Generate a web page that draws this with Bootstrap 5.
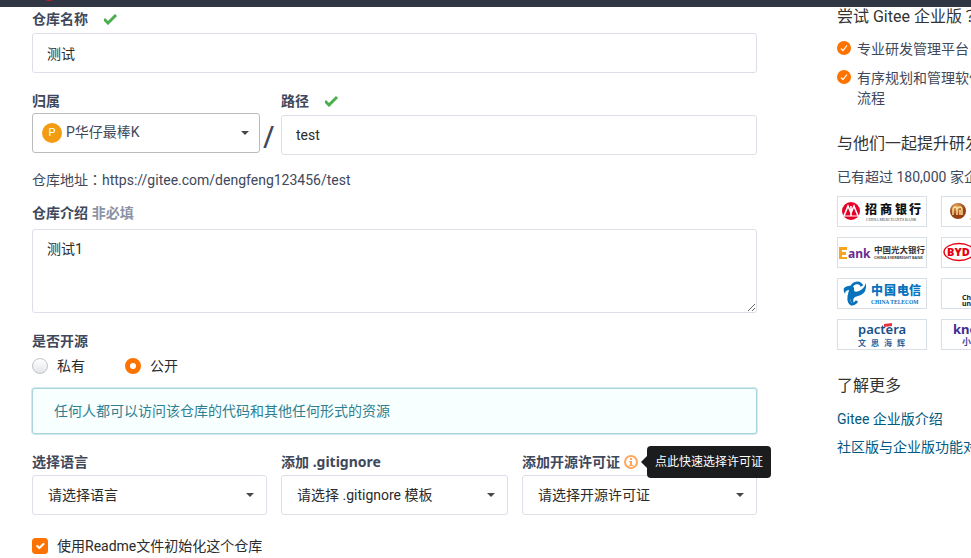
<!DOCTYPE html>
<html lang="zh-CN">
<head>
<meta charset="utf-8">
<meta name="viewport" content="width=device-width, initial-scale=1">
<title>新建仓库 - Gitee</title>
<link href="https://cdn.jsdelivr.net/npm/bootstrap@5.3.0/dist/css/bootstrap.min.css" rel="stylesheet">
<style>
  body { font: 14px/20px Roboto, "Noto Sans CJK SC", sans-serif; color: #40485b; overflow-x: hidden; }
  .topbar { height: 7px; background: #303643; overflow: hidden; padding-left: 43px; }
  .topbar svg { display: block; }
  .page { padding: 2px 0 0 32px; gap: 80px; }
  .side { flex: 0 0 134px; min-width: 0; margin-top: -2px; }
  .side-inner { width: 200px; }
  label, legend { display: block; font-size: 14px; line-height: 20px; }
  .field-label { font-family: "Noto Sans", "Noto Sans CJK SC", sans-serif; font-weight: 700; color: #40485b; margin: 0 0 4px; float: none; }
  .hint { color: #8c92a4; }
  .centered-mark { font-family: "Noto Sans CJK TC", sans-serif; line-height: 0; }
  .form-control, .form-select { font-size: 14px; line-height: 20px; height: 40px; padding: 9px 14px; border: 1px solid #dddfe8; border-radius: 3px; color: #2b2b2b; }
  .form-select { padding-right: 30px; background-size: 8px 4px; background-position: right 12px center;
    background-image: url("data:image/svg+xml,%3Csvg xmlns='http://www.w3.org/2000/svg' viewBox='0 0 8 4'%3E%3Cpath d='M0 0h8L4 4z' fill='%23484848'/%3E%3C/svg%3E"); }
  textarea.form-control { height: 84px; margin-top: 6px; resize: vertical; }
  .section { margin-top: 18px; }
  .owner { flex: 228 1 0; }
  .owner .field-label { margin-bottom: 2px; }
  .owner .form-select { border-color: #babbbc; padding-left: 33px; color: #40485b; padding-top: 8px; padding-bottom: 10px; background-position: right 10px center; }
  .avatar { left: 10px; bottom: 10px; width: 20px; height: 20px; border-radius: 50%; background: #f39c12; color: #fff; font-size: 11px; line-height: 20px; text-align: center; pointer-events: none; }
  .slash { flex: 0 0 21px; font: 30px/36px "Noto Sans", sans-serif; padding-left: 3px; }
  .path { flex: 476 1 0; }
  .address { margin: 15px 0 13px; }
  .visibility .field-label { margin-bottom: 5px; }
  .choices { gap: 40px; }
  .pick { display: flex; align-items: center; gap: 9px; color: #2b2b2b; }
  .pick .form-check-input { width: 16px; height: 16px; margin: 0; border: 1px solid #c3c4c6; flex: none; box-shadow: none; }
  .pick [type=radio] { background: linear-gradient(#fff, #e3e6ea); }
  .pick [type=radio]:checked { background: #fff; border: 5px solid #fe7300; }
  .pick [type=checkbox] { border-radius: 3px; }
  .pick [type=checkbox]:checked { background-color: #fe7300; border-color: #fe7300; }
  .notice { margin: 12px 0 0; padding: 11px 21px; border: 1px solid #a9d5de; border-radius: 3px; background: #f8ffff; color: #2f7f93; box-shadow: 0 0 0 1px #d5e8ee; line-height: 22px; }
  .options { display: grid; grid-template-columns: 235fr 227fr 235fr; gap: 14px; }
  .options .field-label { margin-bottom: 3px; }
  .options .form-select { padding-left: 15px; }
  .tip { left: 125px; top: -6px; padding: 6px 8px; border-radius: 4px; background: #1b1c1d; color: #fff; font-size: 12px; line-height: 20px; white-space: nowrap; z-index: 2; }
  .tip::before { content: ""; position: absolute; left: -6px; top: 10px; border: 6px solid transparent; border-right-color: #1b1c1d; border-left: 0; }
  .readme { margin-top: 21px; }
  .side h2 { font-size: 16px; line-height: 20px; font-weight: 400; color: #333; margin: 26px 0 13px; }
  .side h2:first-child { margin: 0 0 12px; }
  .perks { display: grid; gap: 9px; margin: 0; }
  .perks li { display: flex; gap: 6px; }
  .perks svg { flex: none; margin-top: 2px; }
  .logos { display: grid; grid-template-columns: 90px 90px; gap: 10px 14px; margin-top: 9px; }
  .logos svg { display: block; width: 90px; height: 31px; border: 1px solid #d8dfe6; font-family: "Noto Sans", "Noto Sans CJK SC", sans-serif; }
  .side a { display: table; color: #005980; text-decoration: none; margin-bottom: 8px; white-space: nowrap; }
</style>
</head>
<body>
<header class="topbar">
  <svg width="12" height="7" viewBox="0 0 12 7" aria-hidden="true"><circle cx="6" cy="-6" r="7" fill="#c71d23"/></svg>
</header>
<div class="page d-flex">
  <main class="flex-grow-1">
    <form>
      <div>
        <label class="field-label d-flex align-items-center" for="name">仓库名称
          <svg class="ms-3" width="14" height="12" viewBox="0 0 14 12" aria-hidden="true"><path d="M0 6l4 4 8-8" fill="none" stroke="#4bae4f" stroke-width="3"/></svg>
        </label>
        <input class="form-control" id="name" type="text" value="测试">
      </div>

      <div class="section d-flex align-items-start">
        <div class="owner position-relative">
          <label class="field-label" for="owner">归属</label>
          <select class="form-select" id="owner"><option>P华仔最棒K</option></select>
          <span class="avatar position-absolute">P</span>
        </div>
        <div class="slash align-self-end">/</div>
        <div class="path">
          <label class="field-label d-flex align-items-center" for="path">路径
            <svg class="ms-3" width="14" height="12" viewBox="0 0 14 12" aria-hidden="true"><path d="M0 6l4 4 8-8" fill="none" stroke="#4bae4f" stroke-width="3"/></svg>
          </label>
          <input class="form-control" id="path" type="text" value="test">
        </div>
      </div>
      <p class="address">仓库地址<span class="centered-mark" lang="zh-TW">：</span>https://gitee.com/dengfeng123456/test</p>

      <label class="field-label mb-0" for="intro">仓库介绍 <span class="hint">非必填</span></label>
      <textarea class="form-control" id="intro">测试1</textarea>

      <fieldset class="section visibility">
        <legend class="field-label">是否开源</legend>
        <div class="choices d-flex">
          <label class="pick"><input class="form-check-input" type="radio" name="visibility">私有</label>
          <label class="pick"><input class="form-check-input" type="radio" name="visibility" checked>公开</label>
        </div>
      </fieldset>
      <div class="notice">任何人都可以访问该仓库的代码和其他任何形式的资源</div>

      <div class="section options">
        <div>
          <label class="field-label" for="lang">选择语言</label>
          <select class="form-select" id="lang"><option>请选择语言</option></select>
        </div>
        <div>
          <label class="field-label" for="ignore">添加 .gitignore</label>
          <select class="form-select" id="ignore"><option>请选择 .gitignore 模板</option></select>
        </div>
        <div class="position-relative">
          <label class="field-label d-flex align-items-center gap-1" for="license">添加开源许可证
            <svg width="14" height="14" viewBox="0 0 14 14" aria-hidden="true"><circle cx="7" cy="7" r="6" fill="none" stroke="#ffa75c" stroke-width="2"/><path d="M6 3h2v2H6zM5 6h3v4h1v1H5v-1h1V7H5z" fill="#ffa75c"/></svg>
          </label>
          <select class="form-select" id="license"><option>请选择开源许可证</option></select>
          <div class="tip position-absolute" role="tooltip">点此快速选择许可证</div>
        </div>
      </div>

      <label class="pick readme"><input class="form-check-input" type="checkbox" checked>使用Readme文件初始化这个仓库</label>
    </form>
  </main>

  <aside class="side">
    <div class="side-inner">
      <h2>尝试 Gitee 企业版<span class="centered-mark" lang="zh-TW">？</span></h2>
      <ul class="perks list-unstyled">
        <li>
          <svg width="14" height="14" viewBox="0 0 14 14" aria-hidden="true"><circle cx="7" cy="7" r="7" fill="#fe7300"/><path d="M4 7.5l2 2L10 4.5" fill="none" stroke="#fff" stroke-width="1.2"/></svg>
          <span>专业研发管理平台</span>
        </li>
        <li>
          <svg width="14" height="14" viewBox="0 0 14 14" aria-hidden="true"><circle cx="7" cy="7" r="7" fill="#fe7300"/><path d="M4 7.5l2 2L10 4.5" fill="none" stroke="#fff" stroke-width="1.2"/></svg>
          <span>有序规划和管理软件<br>流程</span>
        </li>
      </ul>

      <h2>与他们一起提升研发</h2>
      <div>已有超过 180,000 家企业</div>
      <div class="logos">
        <svg viewBox="0 0 88 29" role="img" aria-label="招商银行">
          <circle cx="13" cy="14" r="9" fill="#e60027"/><path d="M6 19l4-10 3 7 3-7 4 10M13 9v10" fill="none" stroke="#fff" stroke-width="1.6"/><path d="M4 19h18" stroke="#fff"/>
          <text x="27 42 57 71" y="17" font-size="12" font-weight="900" fill="#111">招商银行</text>
          <text x="28" y="24" font-size="4" font-family="Liberation Serif, serif" fill="#444">CHINA MERCHANTS BANK</text>
        </svg>
        <svg viewBox="0 0 88 29" role="img" aria-label="民生">
          <defs><radialGradient id="gold" cx=".4" cy=".25"><stop stop-color="#e7ae62"/><stop offset="1" stop-color="#963f12"/></radialGradient></defs>
          <circle cx="16" cy="14" r="8" fill="url(#gold)"/><path d="M11 18v-5q0-3 2-3t2 3v5M15 12q1-2 3-2t2 3v5M18 18v-5" fill="none" stroke="#ffe29a" stroke-width="1.4"/>
          <text x="28" y="17" font-size="13" font-weight="700" fill="#dda13a">民生</text><path d="M28 22h40" stroke="#dda13a"/>
        </svg>
        <svg viewBox="0 0 88 29" role="img" aria-label="中国光大银行">
          <path d="M1 9h8v3H4v2h4v3H4v2h5v2H1z" fill="#f7a51c"/>
          <text x="10" y="20" font-size="12" font-weight="700" fill="#6a2a91">ank</text>
          <text x="36" y="15" font-size="8.5" font-weight="700" fill="#333">中国光大银行</text>
          <text x="36" y="21" font-size="3.8" font-weight="700" fill="#444">CHINA EVERBRIGHT BANK</text>
        </svg>
        <svg viewBox="0 0 88 29" role="img" aria-label="BYD">
          <ellipse cx="17" cy="14" rx="15" ry="8.5" fill="none" stroke="#e7000f" stroke-width="1.4"/>
          <text x="5" y="18" font-size="11" font-weight="900" fill="#e7000f">BYD</text>
        </svg>
        <svg viewBox="0 0 88 29" role="img" aria-label="中国电信">
          <path d="M7 15Q3 8 10 7Q17 6 16 11Q16 14 21 12Q26 10 28 4Q29 13 23 16L17 18Q14 20 16 25Q11 22 12 17Q13 10 10 11Q7 12 7 15z" fill="#0872bd"/>
          <path d="M24 7Q22 3 18 4Q13 5 12 13Q9 22 13 25Q16 26 19 22" fill="none" stroke="#0872bd" stroke-width="2.8"/>
          <text x="33 46 59 71" y="16" font-size="12" font-weight="900" fill="#0872bd">中国电信</text>
          <text x="33" y="25" font-size="5.5" font-weight="700" font-family="Liberation Serif, serif" fill="#0872bd">CHINA TELECOM</text>
        </svg>
        <svg viewBox="0 0 88 29" role="img" aria-label="China unicom">
          <text x="20" y="21" font-size="7" font-weight="700" fill="#222">Ch</text>
          <text x="20" y="27" font-size="7" font-weight="700" fill="#222">un</text>
        </svg>
        <svg viewBox="0 0 88 29" role="img" aria-label="pactera 文思海辉">
          <text x="20" y="14" font-size="13" font-weight="600" fill="#174f88">pactera</text><path d="M46 4l8-1v3l-8 1z" fill="#e6343c"/>
          <text x="20 33 46 59" y="26" font-size="8" font-weight="700" fill="#31639a">文思海辉</text>
        </svg>
        <svg viewBox="0 0 88 29" role="img" aria-label="know">
          <text x="11" y="14" font-size="13" font-weight="700" fill="#3d2b91">know</text>
          <text x="20" y="25" font-size="9" font-weight="700" fill="#4b3f9c">小米</text>
        </svg>
      </div>

      <h2>了解更多</h2>
      <a href="#">Gitee 企业版介绍</a>
      <a href="#">社区版与企业版功能对比</a>
    </div>
  </aside>
</div>
<script src="https://cdn.jsdelivr.net/npm/bootstrap@5.3.0/dist/js/bootstrap.bundle.min.js"></script>
</body>
</html>
